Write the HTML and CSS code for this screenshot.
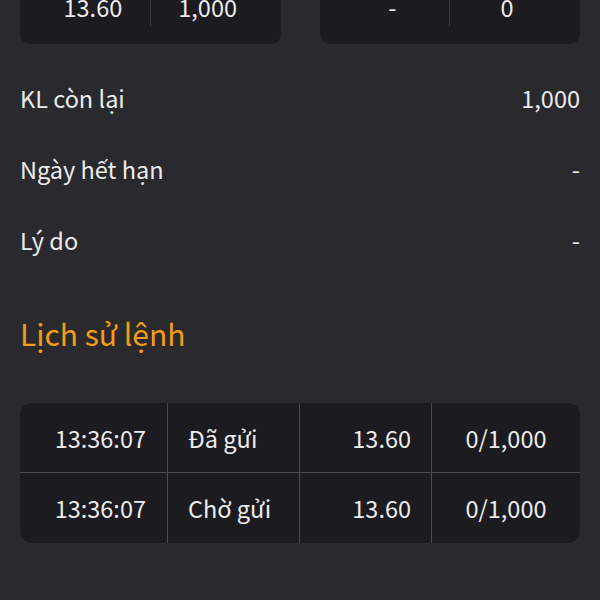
FILE: index.html
```html
<!DOCTYPE html>
<html lang="vi">
<head>
<meta charset="utf-8">
<link rel="stylesheet" href="styles.css">
</head>
<body>
<div class="page">
  <div class="cards">
    <div class="card">
      <div class="cell c-left">13.60</div>
      <div class="cell c-right">1,000</div>
    </div>
    <div class="card">
      <div class="cell c-left">-</div>
      <div class="cell c-right">0</div>
    </div>
  </div>

  <div class="info">
    <div class="row"><span class="label">KL còn lại</span><span class="value">1,000</span></div>
    <div class="row"><span class="label">Ngày hết hạn</span><span class="value">-</span></div>
    <div class="row"><span class="label">Lý do</span><span class="value">-</span></div>
  </div>

  <h2 class="title">Lịch sử lệnh</h2>

  <div class="history">
    <div class="h-cell time">13:36:07</div>
    <div class="h-cell status">Đã gửi</div>
    <div class="h-cell price">13.60</div>
    <div class="h-cell qty">0/1,000</div>
    <div class="h-cell time last">13:36:07</div>
    <div class="h-cell status last">Chờ gửi</div>
    <div class="h-cell price last">13.60</div>
    <div class="h-cell qty last">0/1,000</div>
  </div>
</div>
</body>
</html>
```
FILE: styles.css
```css
* { box-sizing: border-box; }
html, body {
  margin: 0;
  padding: 0;
  background: #2a292e;
}
body {
  font-family: "Noto Sans CJK SC", "Noto Sans", sans-serif;
  color: #ececec;
}
.page {
  padding: 0 20px;
}
.cards {
  display: flex;
  gap: 39px;
}
.card {
  flex: 1;
  height: 44px;
  background: #1c1b20;
  border-radius: 0 0 10px 10px;
  display: flex;
}
.cell {
  flex: 1;
  height: 26px;
  font-size: 23.5px;
  line-height: 14px;
  text-align: center;
}
.c-left {
  padding-left: 16px;
  border-right: 1px solid #3a393e;
}
.c-right {
  padding-right: 16px;
}
.info {
  margin-top: 18px;
}
.row {
  height: 71px;
  display: flex;
  justify-content: space-between;
  align-items: center;
  font-size: 23.5px;
}
.title {
  margin: 38px 0 0;
  height: 40px;
  line-height: 40px;
  font-size: 30px;
  font-weight: normal;
  color: #f39c1a;
}
.history {
  margin-top: 50px;
  display: grid;
  grid-template-columns: 148px 132px 132px 1fr;
  grid-auto-rows: 70px;
  background: #1c1b20;
  border-radius: 12px;
  overflow: hidden;
  font-size: 23.5px;
}
.h-cell {
  display: flex;
  align-items: center;
  border-right: 1px solid #4a494e;
  border-bottom: 1px solid #4a494e;
}
.h-cell.last {
  border-bottom: none;
}
.h-cell.qty {
  border-right: none;
  justify-content: center;
}
.time {
  justify-content: flex-end;
  padding-right: 21px;
}
.status {
  padding-left: 20px;
}
.price {
  justify-content: flex-end;
  padding-right: 20px;
}
```
